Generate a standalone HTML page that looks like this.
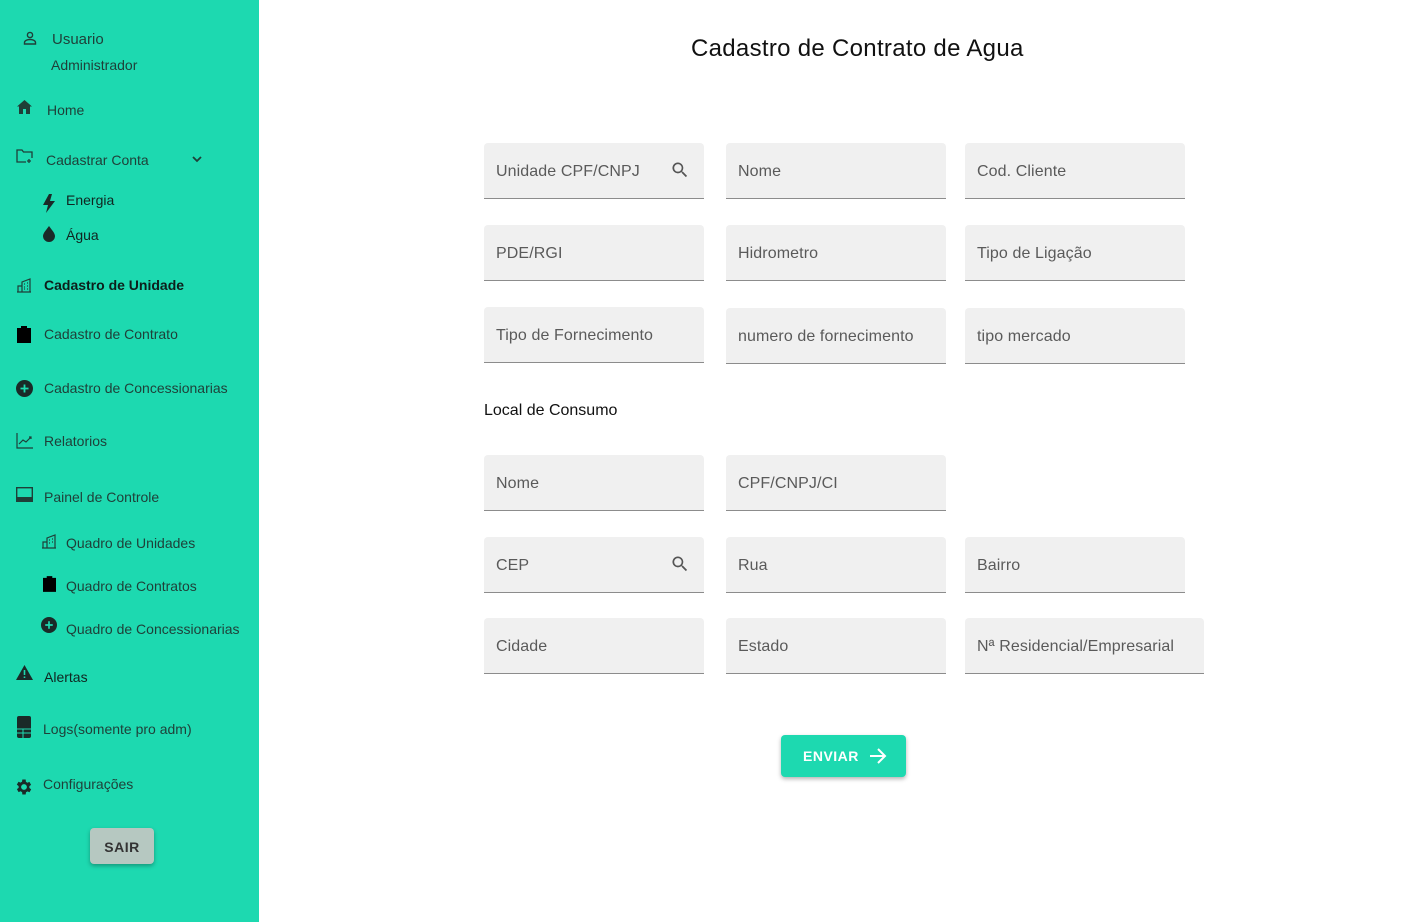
<!DOCTYPE html>
<html><head><meta charset="utf-8"><style>
*{margin:0;padding:0;box-sizing:border-box}
body{width:1424px;height:922px;background:#fff;font-family:"Liberation Sans",sans-serif;position:relative;overflow:hidden}
#sb{position:absolute;left:0;top:0;width:259px;height:922px;background:#1dd9b0;color:#1f3f38}
.t{position:absolute;font-size:14px;white-space:nowrap}
.i{position:absolute}
h1{position:absolute;left:691px;top:35px;font-size:24px;font-weight:400;color:#111;letter-spacing:0.3px}
.f{position:absolute;width:220px;height:56px;background:#f0f0f0;border-radius:4px 4px 0 0;border-bottom:1px solid #8c8c8c;font-size:16px;color:#5a5a5a;padding:20px 12px 0;letter-spacing:0.1px}
.f svg{position:absolute;right:14px;top:17px}
.btn{position:absolute;border-radius:4px;box-shadow:0 2px 4px rgba(0,0,0,.3);font-size:14px;font-weight:700;letter-spacing:.5px}
</style></head><body>
<div id="sb">
<svg class="i" style="left:23px;top:31px" width="14" height="14" viewBox="0 0 14 14" fill="none" stroke="#1f3f38" stroke-width="1.4"><circle cx="7" cy="4" r="2.6"/><path d="M1.5 13v-1.5c0-2 3-3 5.5-3s5.5 1 5.5 3V13z"/></svg>
<div class="t" style="left:52px;top:31px;font-size:15px">Usuario</div>
<div class="t" style="left:51px;top:57px">Administrador</div>
<svg class="i" style="left:17px;top:100px" width="15" height="14" viewBox="0 0 15 14"><path d="M7.5 0L0 6.5h2V14h4V9h3v5h4V6.5h2z" fill="#1f3f38"/></svg>
<div class="t" style="left:47px;top:102px">Home</div>
<svg class="i" style="left:16px;top:149px" width="17" height="15" viewBox="0 0 17 15" fill="none" stroke="#1f3f38" stroke-width="1.3"><path d="M10 13H1V1h5l1.5 2H16v6"/><path d="M13 10v4M11 12h4"/></svg>
<div class="t" style="left:46px;top:152px">Cadastrar Conta</div>
<svg class="i" style="left:192px;top:155px" width="10" height="8" viewBox="0 0 10 8"><path d="M1 2l4 4 4-4" stroke="#1f3f38" stroke-width="1.8" fill="none"/></svg>
<svg class="i" style="left:43px;top:194px" width="12" height="19" viewBox="0 0 12 19"><path d="M6 0L0 11h5l-2 8 9-12H7l2-7z" fill="#1a2a28"/></svg>
<div class="t" style="left:66px;top:192px;color:#102520">Energia</div>
<svg class="i" style="left:43px;top:226px" width="12" height="16" viewBox="0 0 12 16"><path d="M6 0C4 3 0 7 0 10a6 6 0 0012 0C12 7 8 3 6 0z" fill="#1a2a28"/></svg>
<div class="t" style="left:66px;top:227px;color:#102520">Água</div>
<svg class="i" style="left:16px;top:277px" width="16" height="16" viewBox="0 0 16 16" fill="none" stroke="#1f3f38" stroke-width="1.2"><path d="M1 15h14M2 15V9h4v6M6 15V5l8-3v13M8 7h1M11 6h1M8 10h1M11 9h1M8 12h1M11 12h1"/></svg>
<div class="t" style="left:44px;top:277px;font-weight:700;color:#0d1f1b">Cadastro de Unidade</div>
<svg class="i" style="left:17px;top:325px" width="14" height="18" viewBox="0 0 14 18"><path d="M4 1h6v2h4v15H0V3h4z" fill="#000"/></svg>
<div class="t" style="left:44px;top:326px">Cadastro de Contrato</div>
<svg class="i" style="left:16px;top:380px" width="17" height="17" viewBox="0 0 17 17"><circle cx="8.5" cy="8.5" r="8.5" fill="#1a2a28"/><path d="M8.5 4.5v8M4.5 8.5h8" stroke="#1dd9b0" stroke-width="1.8"/></svg>
<div class="t" style="left:44px;top:380px">Cadastro de Concessionarias</div>
<svg class="i" style="left:16px;top:433px" width="17" height="16" viewBox="0 0 17 16" fill="none" stroke="#1f3f38" stroke-width="1.2"><path d="M1 0v15h16M3 11l4-4 3 2 5-5M13 4h2v2"/></svg>
<div class="t" style="left:44px;top:433px">Relatorios</div>
<svg class="i" style="left:16px;top:487px" width="17" height="16" viewBox="0 0 17 16"><rect x="0.7" y="0.7" width="15.6" height="10" fill="none" stroke="#1f3f38" stroke-width="1.4"/><rect x="0" y="11" width="17" height="4" fill="#1f3f38"/></svg>
<div class="t" style="left:44px;top:489px">Painel de Controle</div>
<svg class="i" style="left:41px;top:533px" width="16" height="16" viewBox="0 0 16 16" fill="none" stroke="#1f3f38" stroke-width="1.2"><path d="M1 15h14M2 15V9h4v6M6 15V5l8-3v13M8 7h1M11 6h1M8 10h1M11 9h1"/></svg>
<div class="t" style="left:66px;top:535px">Quadro de Unidades</div>
<svg class="i" style="left:43px;top:575px" width="13" height="17" viewBox="0 0 14 18"><path d="M4 1h6v2h4v15H0V3h4z" fill="#000"/></svg>
<div class="t" style="left:66px;top:578px">Quadro de Contratos</div>
<svg class="i" style="left:41px;top:617px" width="16" height="16" viewBox="0 0 17 17"><circle cx="8.5" cy="8.5" r="8.5" fill="#1a2a28"/><path d="M8.5 4.5v8M4.5 8.5h8" stroke="#1dd9b0" stroke-width="1.8"/></svg>
<div class="t" style="left:66px;top:621px">Quadro de Concessionarias</div>
<svg class="i" style="left:16px;top:665px" width="17" height="15" viewBox="0 0 17 15"><path d="M8.5 0L17 15H0z" fill="#1a2a28"/><path d="M8.5 5v5M8.5 11.5v1.5" stroke="#1dd9b0" stroke-width="1.6"/></svg>
<div class="t" style="left:44px;top:669px;color:#102520">Alertas</div>
<svg class="i" style="left:17px;top:716px" width="14" height="22" viewBox="0 0 14 22"><rect width="14" height="22" rx="2" fill="#1a2a28"/><path d="M0 13h14M0 17h14M6 13v9" stroke="#1dd9b0" stroke-width="1"/></svg>
<div class="t" style="left:43px;top:721px">Logs(somente pro adm)</div>
<svg class="i" style="left:14px;top:777px" width="20" height="20" viewBox="0 0 24 24"><path fill="#1a2a28" d="M19.4 13a7.5 7.5 0 000-2l2.1-1.6-2-3.5-2.5 1a7 7 0 00-1.7-1L15 3h-4l-.4 2.7a7 7 0 00-1.7 1l-2.5-1-2 3.5L6.6 11a7.5 7.5 0 000 2l-2.1 1.6 2 3.5 2.5-1a7 7 0 001.7 1L11 21h4l.4-2.7a7 7 0 001.7-1l2.5 1 2-3.5zM13 15.5a3.5 3.5 0 110-7 3.5 3.5 0 010 7z" transform="translate(-1 0)"/></svg>
<div class="t" style="left:43px;top:776px">Configurações</div>
<div class="btn" style="left:90px;top:828px;width:64px;height:36px;background:#b6c8c1;color:#333;padding-top:11px;text-align:center">SAIR</div>
</div>
<h1>Cadastro de Contrato de Agua</h1>
<div class="f" style="left:484px;top:143px">Unidade CPF/CNPJ<svg width="20" height="20" viewBox="0 0 24 24"><path fill="#555" d="M15.5 14h-.8l-.3-.3A6.5 6.5 0 109.5 16a6.5 6.5 0 004.2-1.6l.3.3v.8l5 5 1.5-1.5zm-6 0a4.5 4.5 0 110-9 4.5 4.5 0 010 9z"/></svg></div>
<div class="f" style="left:726px;top:143px">Nome</div>
<div class="f" style="left:965px;top:143px">Cod. Cliente</div>
<div class="f" style="left:484px;top:225px">PDE/RGI</div>
<div class="f" style="left:726px;top:225px">Hidrometro</div>
<div class="f" style="left:965px;top:225px">Tipo de Ligação</div>
<div class="f" style="left:484px;top:307px">Tipo de Fornecimento</div>
<div class="f" style="left:726px;top:308px">numero de fornecimento</div>
<div class="f" style="left:965px;top:308px">tipo mercado</div>
<div class="t" style="left:484px;top:402px;font-size:16px;color:#111">Local de Consumo</div>
<div class="f" style="left:484px;top:455px">Nome</div>
<div class="f" style="left:726px;top:455px">CPF/CNPJ/CI</div>
<div class="f" style="left:484px;top:537px">CEP<svg width="20" height="20" viewBox="0 0 24 24"><path fill="#555" d="M15.5 14h-.8l-.3-.3A6.5 6.5 0 109.5 16a6.5 6.5 0 004.2-1.6l.3.3v.8l5 5 1.5-1.5zm-6 0a4.5 4.5 0 110-9 4.5 4.5 0 010 9z"/></svg></div>
<div class="f" style="left:726px;top:537px">Rua</div>
<div class="f" style="left:965px;top:537px">Bairro</div>
<div class="f" style="left:484px;top:618px">Cidade</div>
<div class="f" style="left:726px;top:618px">Estado</div>
<div class="f" style="left:965px;top:618px;width:239px">Nª Residencial/Empresarial</div>
<div class="btn" style="left:781px;top:735px;width:125px;height:42px;background:#1dd9b0;color:#fff;padding:13px 0 0 22px">ENVIAR<svg style="position:absolute;left:88px;top:12px" width="18" height="18" viewBox="0 0 18 18"><path d="M1 9h15M9 2l7 7-7 7" stroke="#fff" stroke-width="2" fill="none"/></svg></div>
</body></html>
